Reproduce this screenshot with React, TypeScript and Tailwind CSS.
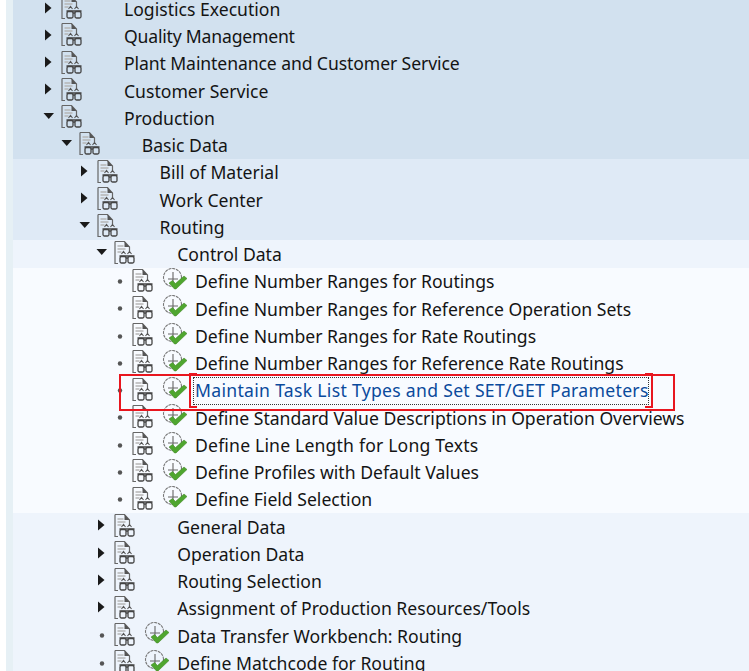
import React from 'react';

type Row = { level: number; kind: 'closed' | 'open' | 'leaf'; text: string; check?: boolean; bg: string; selected?: boolean; fit?: string };

const rows: Row[] = [
  { level: 0, kind: 'closed', text: 'Logistics Execution', bg: 'bg-[#d2e1ef]' },
  { level: 0, kind: 'closed', text: 'Quality Management', bg: 'bg-[#d2e1ef]', fit: 'tracking-[-0.2px]' },
  { level: 0, kind: 'closed', text: 'Plant Maintenance and Customer Service', bg: 'bg-[#d2e1ef]', fit: 'tracking-[-0.1px]' },
  { level: 0, kind: 'closed', text: 'Customer Service', bg: 'bg-[#d2e1ef]' },
  { level: 0, kind: 'open', text: 'Production', bg: 'bg-[#d2e1ef]' },
  { level: 1, kind: 'open', text: 'Basic Data', bg: 'bg-[#d2e1ef]' },
  { level: 2, kind: 'closed', text: 'Bill of Material', bg: 'bg-[#dfeaf6]' },
  { level: 2, kind: 'closed', text: 'Work Center', bg: 'bg-[#dfeaf6]' },
  { level: 2, kind: 'open', text: 'Routing', bg: 'bg-[#dfeaf6]' },
  { level: 3, kind: 'open', text: 'Control Data', bg: 'bg-[#eef4fc]' },
  { level: 4, kind: 'leaf', check: true, text: 'Define Number Ranges for Routings', bg: 'bg-[#f8fbff]' },
  { level: 4, kind: 'leaf', check: true, text: 'Define Number Ranges for Reference Operation Sets', bg: 'bg-[#f8fbff]' },
  { level: 4, kind: 'leaf', check: true, text: 'Define Number Ranges for Rate Routings', bg: 'bg-[#f8fbff]' },
  { level: 4, kind: 'leaf', check: true, text: 'Define Number Ranges for Reference Rate Routings', bg: 'bg-[#f8fbff]' },
  { level: 4, kind: 'leaf', check: true, text: 'Maintain Task List Types and Set SET/GET Parameters', bg: 'bg-[#f8fbff]', selected: true, fit: 'tracking-[0.3px]' },
  { level: 4, kind: 'leaf', check: true, text: 'Define Standard Value Descriptions in Operation Overviews', bg: 'bg-[#f8fbff]' },
  { level: 4, kind: 'leaf', check: true, text: 'Define Line Length for Long Texts', bg: 'bg-[#f8fbff]', fit: 'tracking-[0.18px]' },
  { level: 4, kind: 'leaf', check: true, text: 'Define Profiles with Default Values', bg: 'bg-[#f8fbff]' },
  { level: 4, kind: 'leaf', check: true, text: 'Define Field Selection', bg: 'bg-[#f8fbff]' },
  { level: 3, kind: 'closed', text: 'General Data', bg: 'bg-[#eef4fc]' },
  { level: 3, kind: 'closed', text: 'Operation Data', bg: 'bg-[#eef4fc]' },
  { level: 3, kind: 'closed', text: 'Routing Selection', bg: 'bg-[#eef4fc]' },
  { level: 3, kind: 'closed', text: 'Assignment of Production Resources/Tools', bg: 'bg-[#eef4fc]' },
  { level: 3, kind: 'leaf', check: true, text: 'Data Transfer Workbench: Routing', bg: 'bg-[#eef4fc]' },
  { level: 3, kind: 'leaf', check: true, text: 'Define Matchcode for Routing', bg: 'bg-[#eef4fc]' },
];

const indents = ['w-0', 'w-[17.75px]', 'w-[35.5px]', 'w-[53.25px]', 'w-[71px]'];

function Expander({ kind }: { kind: Row['kind'] }) {
  return (
    <svg width="14" height="14" viewBox="0 0 14 14" className="shrink-0">
      {kind === 'closed' && <path d="M4 0.5 L10.5 6 L4 11.5 Z" fill="#1a1a1a" />}
      {kind === 'open' && <path d="M2.5 2 L13 2 L7.75 8 Z" fill="#1a1a1a" />}
      {kind === 'leaf' && <circle cx="8" cy="7.5" r="2.2" fill="#555" />}
    </svg>
  );
}

function DocGlasses() {
  return (
    <svg width="24" height="25" viewBox="0 0 24 25" fill="none" className="shrink-0">
      <path d="M3 1.5 H12.5 L17.5 7 V11 M3 1.5 V23.5 H6" stroke="#666" strokeWidth="1.2" />
      <path d="M12.5 1.5 V7 H17.5 Z" fill="#555" />
      <path d="M5.5 6 H11.5 M5.5 9 H13.5 M5.5 12 H9.5" stroke="#b5b5b5" strokeWidth="1.3" />
      <path d="M9.5 14 L11.5 11.5 L13.5 14 M15.5 14 L17.5 11.5 L19.5 14" stroke="#555" strokeWidth="1.1" />
      <rect x="8" y="16.5" width="6" height="6.5" rx="1.5" stroke="#444" strokeWidth="1.3" />
      <rect x="16" y="16.5" width="6" height="6.5" rx="1.5" stroke="#444" strokeWidth="1.3" />
      <path d="M7.5 16 H22.5 M14 18 H16" stroke="#444" strokeWidth="1.3" />
    </svg>
  );
}

function ClockCheck() {
  return (
    <svg width="26" height="24" viewBox="0 0 26 24" fill="none" className="shrink-0">
      <circle cx="10.5" cy="9.5" r="9" stroke="#777" strokeWidth="1.1" strokeDasharray="3 0.8" />
      <path d="M11 4 V14 M6 11 H16" stroke="#666" strokeWidth="1.1" />
      <path d="M7 15 L10.5 12.5 L13.5 15.5 L22 8 L25 10.5 L14 21 L12.5 21 Z" fill="#4fa62f" stroke="#3d7f20" strokeWidth="0.5" />
    </svg>
  );
}

function TreeRow({ row }: { row: Row }) {
  return (
    <div className={`h-[27.25px] flex items-center pl-[28px] ${row.bg}`}>
      <div className={`shrink-0 ${indents[row.level]}`} />
      <Expander kind={row.kind} />
      <div className="ml-[4px] w-[24px] shrink-0 -mt-[2px]">
        <DocGlasses />
      </div>
      {row.check ? (
        <div className="ml-[8px] w-[33px] shrink-0 -mt-[2px]">
          <ClockCheck />
        </div>
      ) : (
        <div className="w-[41px] shrink-0" />
      )}
      <span className={`whitespace-nowrap pt-[2px] text-[17.6px] leading-none ${row.fit ?? ''} ${row.selected ? 'text-[#0a4a9c]' : 'text-[#141414]'}`}>{row.text}</span>
    </div>
  );
}

export default function App() {
  return (
    <div className="relative w-[749px] h-[671px] overflow-hidden bg-white font-['Noto_Sans',sans-serif]">
      <div className="flex pl-[6px]">
        <div className="w-[7px] shrink-0 bg-[#e6f0f5]" />
        <div className="flex-1 -mt-[5px]">
          {rows.map((row) => (
            <TreeRow key={row.text} row={row} />
          ))}
        </div>
      </div>
      {/* red markup and focus frame lie over the tree */}
      <div className="absolute left-[193px] top-[377px] w-[456px] h-[28px] border border-dotted border-[#333]" />
      <div className="absolute left-[119px] top-[374px] w-[556px] h-[37px] border-2 border-[#e8161f]" />
      <div className="absolute left-[189px] top-[373px] w-[8px] h-[35px] border-2 border-r-0 border-[#e8161f]" />
      <div className="absolute left-[645px] top-[373px] w-[8px] h-[35px] border-2 border-l-0 border-[#e8161f]" />
    </div>
  );
}
